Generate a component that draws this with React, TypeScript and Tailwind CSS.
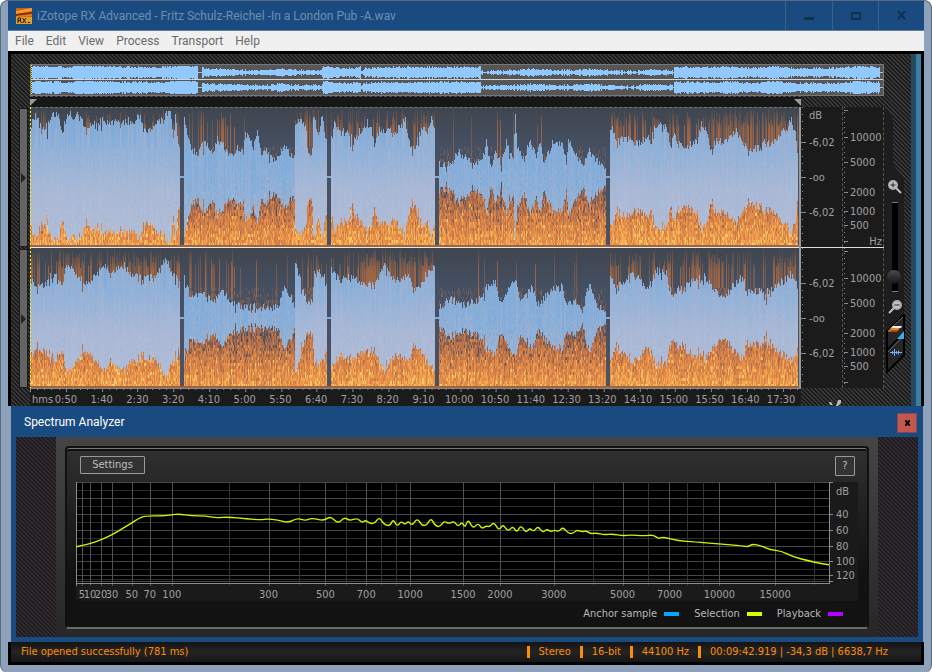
import { useState } from 'react'

type Pt = [number, number]

const MENU = ['File', 'Edit', 'View', 'Process', 'Transport', 'Help']

const TIMES = [
  '0:50', '1:40', '2:30', '3:20', '4:10', '5:00', '5:50', '6:40', '7:30', '8:20', '9:10',
  '10:00', '10:50', '11:40', '12:30', '13:20', '14:10', '15:00', '15:50', '16:40', '17:30',
]

// Songs on the record side: start, end, loud or quiet
const SONGS: [number, number, boolean][] = [
  [0, 150, true],
  [154, 265, false],
  [265, 297, true],
  [301, 406, true],
  [410, 577, false],
  [581, 769, true],
]

// Envelope: x, height of the peak above the centre line
const LEFT: Pt[] = [
  [0, 49], [3, 62], [6, 61], [11, 50], [15, 49], [20, 58], [24, 64], [28, 60], [32, 46], [37, 64], [40, 67], [44, 56],
  [48, 64], [54, 50], [57, 46], [62, 53], [67, 51], [70, 61], [75, 53], [82, 56], [87, 60], [93, 57], [103, 57],
  [110, 63], [113, 47], [118, 49], [125, 52], [133, 58], [137, 66], [140, 67], [143, 40], [145, 64], [149, 28],
  [154, 64], [157, 43], [162, 28], [167, 24], [175, 38], [182, 26], [187, 38], [193, 32], [200, 20], [208, 31],
  [213, 28], [215, 44], [220, 38], [223, 28], [227, 48], [232, 24], [237, 28], [242, 19], [248, 18], [253, 34],
  [260, 22], [264, 20], [265, 52], [270, 60], [275, 52], [278, 25], [282, 27], [283, 60], [288, 46], [292, 60],
  [296, 35], [301, 42], [304, 56], [310, 44], [317, 48], [323, 36], [330, 48], [339, 58], [344, 30], [347, 46],
  [357, 48], [365, 45], [375, 60], [378, 38], [382, 27], [387, 35], [393, 52], [397, 43], [402, 60], [406, 50],
  [410, 15], [417, 12], [423, 18], [430, 25], [440, 18], [448, 13], [455, 26], [457, 36], [462, 11], [465, 26],
  [472, 15], [477, 36], [482, 22], [484, 24], [486, 61], [488, 32], [495, 18], [500, 38], [507, 23], [510, 37],
  [515, 15], [523, 35], [532, 36], [537, 15], [539, 36], [547, 25], [553, 10], [560, 31], [570, 15], [576, 7],
  [581, 50], [583, 48], [588, 35], [595, 41], [602, 35], [610, 36], [617, 41], [622, 36], [624, 48], [628, 53],
  [637, 53], [641, 30], [645, 43], [652, 31], [660, 33], [668, 35], [672, 54], [677, 48], [682, 28], [687, 38],
  [693, 35], [700, 40], [707, 46], [712, 36], [717, 30], [723, 27], [730, 30], [735, 38], [742, 36], [748, 38],
  [753, 48], [758, 51], [762, 57], [766, 48], [769, 20],
]

const RIGHT: Pt[] = [
  [0, 38], [12, 32], [22, 44], [32, 37], [37, 55], [47, 45], [57, 34], [67, 45], [74, 55], [81, 44], [94, 54],
  [101, 44], [113, 39], [126, 42], [135, 59], [145, 42], [149, 40], [154, 42], [160, 25], [175, 25], [185, 19],
  [192, 28], [200, 17], [212, 12], [227, 12], [247, 12], [254, 32], [262, 20], [264, 18], [265, 59], [271, 35],
  [277, 17], [282, 17], [284, 45], [291, 49], [296, 35], [301, 50], [308, 39], [321, 42], [336, 35], [345, 34],
  [353, 54], [363, 39], [378, 42], [385, 25], [397, 45], [405, 51], [410, 12], [420, 20], [434, 14], [449, 19],
  [457, 32], [466, 38], [471, 15], [486, 40], [491, 19], [503, 32], [508, 14], [523, 30], [533, 32], [538, 12],
  [545, 20], [553, 6], [560, 38], [568, 12], [576, 9], [581, 45], [587, 29], [597, 42], [607, 43], [619, 29],
  [627, 49], [637, 45], [642, 25], [666, 38], [676, 42], [684, 27], [696, 25], [713, 42], [718, 27], [735, 27],
  [745, 32], [755, 39], [763, 45], [767, 38], [769, 20],
]

const OVERVIEW: Pt[] = [
  [0, 6], [40, 5], [44, 7], [100, 5], [135, 5], [148, 7], [166, 6], [167, 0], [170, 0], [171, 5], [178, 3], [200, 3],
  [212, 2], [235, 2], [250, 4], [262, 2], [290, 2], [292, 6], [312, 4], [329, 5], [330, 1], [333, 4], [350, 5],
  [390, 5], [449, 5], [450, 1], [480, 2], [500, 3], [530, 2], [560, 3], [600, 1], [618, 3], [641, 2], [642, 0],
  [643, 5], [690, 5], [695, 6], [720, 4], [745, 6], [760, 4], [800, 4], [830, 6], [848, 5], [849, 0], [854, 0],
]

const CURVE: Pt[] = [
  [0, 65], [14, 62], [25, 58], [36, 53], [46, 47], [56, 41], [62, 37], [69, 34], [87, 34], [96, 33], [103, 32],
  [116, 34], [130, 34], [140, 36], [153, 35], [171, 37], [186, 38], [191, 37], [202, 38], [213, 41], [222, 36],
  [230, 39], [236, 36], [249, 39], [255, 34], [263, 42], [269, 35], [274, 39], [282, 36], [287, 41], [290, 38],
  [295, 42], [300, 41], [304, 35], [309, 43], [315, 44], [318, 37], [322, 45], [326, 39], [330, 43], [333, 39],
  [337, 44], [342, 36], [347, 44], [352, 43], [356, 36], [360, 44], [365, 45], [369, 39], [374, 42], [379, 39],
  [383, 45], [387, 40], [390, 46], [393, 37], [398, 47], [403, 41], [407, 47], [411, 44], [415, 45], [419, 40],
  [424, 49], [428, 42], [433, 50], [438, 44], [442, 51], [446, 43], [451, 51], [455, 46], [459, 50], [463, 44],
  [468, 51], [472, 47], [476, 50], [480, 48], [484, 50], [488, 45], [493, 51], [498, 52], [502, 48], [507, 50],
  [512, 49], [516, 52], [522, 51], [529, 53], [538, 52], [548, 54], [556, 53], [569, 54], [579, 53], [584, 57],
  [588, 55], [604, 59], [620, 60], [644, 62], [669, 64], [674, 65], [678, 62], [687, 64], [696, 68], [707, 69],
  [719, 75], [734, 79], [748, 82], [755, 83],
]

const FREQS: [number, string][] = [
  [6, '5'], [14, '10'], [25, '20'], [36, '30'], [56, '50'], [74, '70'], [96, '100'], [193, '300'], [250, '500'],
  [291, '700'], [335, '1000'], [388, '1500'], [425, '2000'], [479, '3000'], [548, '5000'], [595, '7000'],
  [645, '10000'], [701, '15000'],
]
const MINOR_FREQS = [153, 224, 271, 306, 321, 518, 573, 613, 629, 740]
const LEVELS: [number, string][] = [[32, '40'], [48, '60'], [64, '80'], [79, '100'], [93, '120']]

const rng = (seed: number) => () => {
  seed = (seed * 1664525 + 1013904223) % 4294967296
  return seed / 4294967296
}

const sample = (pts: Pt[], x: number) => {
  const i = pts.findIndex((p) => p[0] >= x)
  if (i < 0) return pts[pts.length - 1][1]
  if (i === 0) return pts[0][1]
  const [x0, y0] = pts[i - 1]
  const [x1, y1] = pts[i]
  return y0 + ((y1 - y0) * (x - x0)) / (x1 - x0)
}

// Curve through the midpoints, so the peaks come out round
const smooth = (pts: Pt[]) => {
  let d = `M${pts[0]}`
  for (let i = 1; i < pts.length - 1; i++) {
    const [x, y] = pts[i]
    const [nx, ny] = pts[i + 1]
    d += `Q${x} ${y} ${(x + nx) / 2} ${(y + ny) / 2}`
  }
  return d + `L${pts[pts.length - 1]}`
}

const HEAT = ['#5f585d', '#866153', '#ad6d4c', '#cd7d49', '#e58e4a', '#f3a750', '#fcc864']

function buildChannel(env: Pt[], seed: number) {
  const rand = rng(seed)
  const heat = HEAT.map(() => '')
  let wave = ''
  let wash = ''
  let streaks = ''
  let faint = ''
  let sheen = ''
  let cluster = 0
  for (let x = 0; x < 769; x++) {
    const song = SONGS.find((s) => x >= s[0] && x < s[1])
    if (!song) {
      wave += `M${x} 69h1v2h-1z`
      continue
    }
    const loud = song[2]
    const base = sample(env, x)
    const spike = rand() < 0.08 ? -rand() * 10 : 0
    const amp = Math.max(5, Math.min(66, Math.round(base - 1 + (rand() - 0.5) * (loud ? 9 : 8) + spike)))
    const bar = `M${x} ${70 - amp}h1v${amp * 2}h-1z`
    wave += bar
    if (loud) wash += bar
    cluster = cluster * 0.9 + (rand() - 0.5) * 0.5
    const striped = x > 154 && x < 215
    const hot = striped ? 0.3 : loud ? 0.6 + cluster : 0.04
    if (rand() < hot) {
      const top = Math.round(rand() * 20)
      if (rand() < 0.5) streaks += `M${x} ${top}h1V90h-1z`
      else faint += `M${x} ${top}h1V90h-1z`
    }
    if (rand() < 0.3) sheen += bar
    const column = (rand() - 0.5) * 1.2
    for (let y = 40; y < 138; y += 3) {
      const n = y / 140
      let level = loud ? n * 6.4 - 1.2 : n * 7 - 2.1
      level += column + (rand() - 0.5) * 2
      if (!loud && rand() < 0.85 - n) level -= 2
      if (rand() < (n - 0.55) * 0.4) level += 1.6
      const k = Math.min(6, Math.floor(level))
      if (k >= 0) heat[k] += `M${x} ${y}h1v3h-1z`
    }
  }
  return { wave, wash, heat, streaks, faint, sheen }
}

const CHANNELS = [buildChannel(LEFT, 11), buildChannel(RIGHT, 57)]

function buildOverview(seed: number) {
  const rand = rng(seed)
  let d = ''
  for (let x = 1; x < 852; x++) {
    const base = sample(OVERVIEW, x)
    const a = Math.max(0, Math.min(6, Math.round(base + (base > 1 ? (rand() - 0.65) * 2 : 0))))
    d += `M${x} ${7 - a}h1v${a * 2 + 1}h-1z`
  }
  return d
}

const OVERVIEWS = [buildOverview(3), buildOverview(8)]

const HATCH = 'bg-[repeating-linear-gradient(45deg,#1a1a1a_0_1px,#484848_2px,#1a1a1a_3px)]'
const WEAVE = 'bg-[repeating-linear-gradient(45deg,#1f1b1f_0_1px,#383338_2px,#1f1b1f_3px)]'

function TitleBar() {
  return (
    <header className="flex h-[30px] items-center border-b border-[#5f7f9f] bg-[#1a4b80] font-[Roboto,sans-serif] text-xs text-[#6d8eaf]">
      <svg className="ml-2 size-4 shrink-0" viewBox="0 0 16 16">
        <rect width="16" height="16" fill="#c9601a" />
        <path d="M0 3l16-3v3L0 6z" fill="#f79a2a" />
        <path d="M0 6l16-2v2L0 8z" fill="#7d2f08" />
        <path d="M0 8l16-2v2L0 9z" fill="#e87c20" />
        <rect y="9" width="16" height="7" fill="#e0a02c" />
        <path d="M2 15v-5h2.500v2.500H2m2 0l1.500 2.500M6.500 10l3.500 5m0-5l-3.500 5M12 14.500h2" stroke="#20140a" fill="none" />
      </svg>
      <h1 className="ml-[5px] flex-1 truncate">iZotope RX Advanced - Fritz Schulz-Reichel -In a London Pub -A.wav</h1>
      <button aria-label="Minimize" className="flex h-full w-[47px] items-center justify-center border-l border-[#3c6088]">
        <svg width="10" height="10"><path d="M0 6h10v3H0z" fill="#12304f" /></svg>
      </button>
      <button aria-label="Maximize" className="flex h-full w-[46px] items-center justify-center border-l border-[#3c6088]">
        <svg width="10" height="8"><path d="M1 1h8v6H1z" fill="none" stroke="#12304f" strokeWidth="2" /></svg>
      </button>
      <button aria-label="Close" className="flex h-full w-[46px] items-center justify-center border-l border-[#3c6088]">
        <svg width="10" height="9"><path d="M1 0l7 8M8 0L1 8" stroke="#12304f" strokeWidth="2" /></svg>
      </button>
    </header>
  )
}

function MenuBar() {
  return (
    <nav className="flex h-5 items-center bg-[#f0f0f0] pl-px font-[Roboto,sans-serif] text-xs text-[#6a6a6a]">
      {MENU.map((item) => (
        <button key={item} className="px-1.5">{item}</button>
      ))}
    </nav>
  )
}

function Overview() {
  return (
    <div className="h-8 border border-[#777] bg-[#565656]">
      <svg className="block h-full w-full" viewBox="0 0 852 30" preserveAspectRatio="none" shapeRendering="crispEdges">
        <path d={OVERVIEWS[0]} fill="#90c8ff" />
        <g transform="translate(0 15)"><path d={OVERVIEWS[1]} fill="#90c8ff" /></g>
        <path d="M0 14h852v1H0z" fill="#d2d2d2" />
        <path d="M0 0v30" stroke="#f2f200" strokeWidth="2" strokeDasharray="1 1" />
      </svg>
    </div>
  )
}

function Spectrogram() {
  return (
    <svg className="block h-[281px] w-full" viewBox="0 0 770 281" preserveAspectRatio="none" shapeRendering="crispEdges">
      <defs>
        <linearGradient id="sky" x1="0" y1="0" x2="0" y2="1">
          <stop offset="0" stopColor="#40464f" />
          <stop offset="0.3" stopColor="#455063" />
          <stop offset="1" stopColor="#4c5260" />
        </linearGradient>
        <linearGradient id="streak" gradientUnits="userSpaceOnUse" x1="0" y1="0" x2="0" y2="90">
          <stop offset="0" stopColor="#a8663f" stopOpacity="0.15" />
          <stop offset="0.25" stopColor="#b46b40" stopOpacity="0.9" />
          <stop offset="1" stopColor="#c4733f" />
        </linearGradient>
        <linearGradient id="wash" gradientUnits="userSpaceOnUse" x1="0" y1="0" x2="0" y2="140">
          <stop offset="0.15" stopColor="#c8c4d8" stopOpacity="0" />
          <stop offset="0.6" stopColor="#c8c4d8" stopOpacity="0.4" />
        </linearGradient>
      </defs>
      {CHANNELS.map((c, i) => (
        <g key={i} transform={i ? 'translate(0 141)' : undefined}>
          <rect width="770" height="140" fill="url(#sky)" />
          <path d={c.faint} fill="url(#streak)" opacity="0.5" />
          <path d={c.streaks} fill="url(#streak)" opacity="0.85" />
          {c.heat.map((d, k) => (
            <path key={k} d={d} fill={HEAT[k]} />
          ))}
          <path d="M0 138h770v2H0z" fill="#9c6440" />
          <path d={c.wave} fill="#8cc0f4" opacity="0.82" />
          <path d={c.wash} fill="url(#wash)" />
          <path d={c.sheen} fill="#b8b8d0" opacity="0.2" />
        </g>
      ))}
      <path d="M0 0.500h770" stroke="#777" strokeDasharray="3 2" />
      <path d="M0 140h770v1H0z" fill="#e8e8e8" />
      <path d="M0 0v281" stroke="#f2f200" strokeWidth="2" strokeDasharray="2 2" />
    </svg>
  )
}

function TimeRuler() {
  return (
    <div className="relative h-[18px] bg-[#1b1b1b] text-[#a0a0a0]">
      <svg className="absolute inset-0 h-1 w-full" viewBox="0 0 770 4" preserveAspectRatio="none">
        <path d="M0 0.500h770" stroke="#8a8a8a" />
        {Array.from({ length: 108 }, (_, i) => (
          <path key={i} d={`M${Math.round(i * 7.16)}.500 0v${i % 5 ? 2 : 4}`} stroke="#8a8a8a" />
        ))}
      </svg>
      <span className="absolute left-0.5 top-[5px]">hms</span>
      <div className="ml-[18px] mr-0.5 grid grid-cols-[repeat(21,minmax(0,1fr))] pt-[5px] text-center">
        {TIMES.map((t) => (
          <span key={t} className="whitespace-nowrap">{t}</span>
        ))}
      </div>
    </div>
  )
}

function LevelScale({ unit }: { unit?: string }) {
  return (
    <div className="relative h-[140px] pl-2 text-[#a0a0a0]">
      <svg className="absolute left-0 top-0" width="6" height="140" stroke="#8a8a8a">
        <path d="M1.500 0v140" strokeDasharray="1 6" />
        <path d="M0 35.500h5M0 70.500h5M0 105.500h5" />
      </svg>
      <div className="flex h-[18px] items-center">{unit}</div>
      <div className="flex h-[35px] items-center">-6,02</div>
      <div className="flex h-[35px] items-center">-oo</div>
      <div className="flex h-[35px] items-center">-6,02</div>
    </div>
  )
}

function FreqScale({ unit }: { unit?: string }) {
  return (
    <div className="relative h-[140px] overflow-hidden border-x border-dashed border-[#555] pl-[7px] text-[#a0a0a0]">
      <svg className="absolute left-0 top-0" width="6" height="140" stroke="#8a8a8a">
        <path d="M1.500 0v140" strokeDasharray="1 4" />
        <path d="M1 3.500h4M1 30.500h4M1 55.500h4M1 85.500h4M1 104.500h4M1 118.500h4M1 134.500h4" />
      </svg>
      <div className="mt-6">10000</div>
      <div className="mt-[11px]">5000</div>
      <div className="mt-4">2000</div>
      <div className="mt-[5px]">1000</div>
      <div>500</div>
      <div className="mt-0.5 pr-px text-right">{unit}</div>
    </div>
  )
}

function ZoomRail() {
  const [zoom, setZoom] = useState(10)
  return (
    <div className="relative flex w-[27px] flex-col items-start">
      <svg className="absolute left-0 top-2.5" width="27" height="270">
        <path d="M0 0l9 12v46l11 15v150L0 262z" fill="#1d1d1d" />
      </svg>
      <button aria-label="Zoom in" className="relative ml-1 mt-[84px]">
        <svg className="block" width="14" height="14" fill="none">
          <circle cx="5" cy="5" r="4" fill="#c4c4c4" stroke="#b0b0b0" strokeWidth="2" />
          <path d="M2.500 5h5M5 2.500v5" stroke="#222" />
          <path d="M8 8l5 5" stroke="#c0c0c0" strokeWidth="2" />
        </svg>
      </button>
      <input
        type="range"
        aria-label="Zoom level"
        value={zoom}
        onChange={(e) => setZoom(Number(e.target.value))}
        className="relative ml-1 mt-2 h-[90px] w-3.5 appearance-none bg-transparent [direction:rtl] [writing-mode:vertical-lr] [&::-webkit-slider-runnable-track]:w-1.5 [&::-webkit-slider-runnable-track]:border-x [&::-webkit-slider-runnable-track]:border-[#777] [&::-webkit-slider-runnable-track]:bg-black [&::-webkit-slider-thumb]:-ml-[5px] [&::-webkit-slider-thumb]:size-3.5 [&::-webkit-slider-thumb]:appearance-none [&::-webkit-slider-thumb]:rounded-full [&::-webkit-slider-thumb]:bg-linear-to-b [&::-webkit-slider-thumb]:from-[#4c4c4c] [&::-webkit-slider-thumb]:to-[#161616]"
      />
      <button aria-label="Zoom out" className="relative ml-1 mt-2">
        <svg className="block" width="14" height="14" fill="none">
          <circle cx="9" cy="5" r="4" fill="#c4c4c4" stroke="#b0b0b0" strokeWidth="2" />
          <path d="M6.500 5h5" stroke="#222" />
          <path d="M6 8l-5 5" stroke="#c0c0c0" strokeWidth="2" />
        </svg>
      </button>
      <button aria-label="Spectrogram and waveform balance" className="relative ml-0.5">
        <svg className="block" width="19" height="60">
          <path d="M1 18L18 1v40L1 58z" fill="#262626" stroke="#000" strokeWidth="2" />
          <path d="M2 17L17 3" stroke="#777" />
          <path d="M1 36L18 19" stroke="#000" strokeWidth="2" />
          <path d="M2 38L17 22" stroke="#666" />
          <path d="M18 17v8h-7z" fill="#38b0f0" />
          <path d="M6 13h9l-5 5H2z" fill="#e58a2c" />
          <path d="M7 12h9l-1 2H5z" fill="#f4ece0" />
          <path d="M5 16h8l-2 2H3z" fill="#a74a1a" />
          <path d="M4 38.500h12M6.500 37v3M8.500 35v7M10.500 37v3M12.500 36.500v4" stroke="#6fb2ff" />
        </svg>
      </button>
    </div>
  )
}

function Editor() {
  return (
    <main className={`flex border-l-[3px] border-t-[3px] border-black ${HATCH}`}>
      <div className="flex w-[19px] flex-col gap-0.5 pl-2 pt-[54px]">
        {['Left channel', 'Right channel'].map((name) => (
          <button key={name} aria-label={name} className="flex h-[139px] w-[9px] items-center justify-center border border-[#1a1a1a] bg-[#646464]">
            <svg width="6" height="10"><path d="M0 0l5 5-5 5z" fill="#222" /></svg>
          </button>
        ))}
      </div>
      <div className="min-w-0 flex-1 pt-2.5">
        <Overview />
        <div className="flex">
          <div className="min-w-0 flex-1">
            <div className="flex h-[11px] items-end justify-between border-t border-dashed border-[#555] bg-[#171717]">
              <svg width="7" height="8"><path d="M0 0h7L0 7z" fill="#999" /></svg>
              <svg width="7" height="8"><path d="M0 0h7v7z" fill="#999" /></svg>
            </div>
            <div className="border-r-2 border-[#999]">
              <Spectrogram />
            </div>
            <TimeRuler />
          </div>
          <div className="grid w-[83px] grid-cols-[41px_42px] content-start pt-[11px]">
            <div className="border-b border-[#ddd] bg-[#1b1b1b]"><LevelScale unit="dB" /></div>
            <div className="border-b border-[#ddd] bg-[#1b1b1b]"><FreqScale unit="Hz" /></div>
            <div className="bg-[#1b1b1b]"><LevelScale /></div>
            <div className="bg-[#1b1b1b]"><FreqScale /></div>
            <svg className="col-span-2 ml-7 mt-3" width="14" height="6">
              <path d="M0 2h2l2 3H1zM9 0h3v3l-3 3H7z" fill="#b8b8b8" />
            </svg>
          </div>
        </div>
      </div>
      <div className="pt-[42px]"><ZoomRail /></div>
      <div className="w-[5px] bg-[#25475f]" />
      <div className="w-[5px] bg-[#3a80a4]" />
      <div className="w-[3px] bg-black" />
    </main>
  )
}

function SpectrumChart() {
  return (
    <svg className="block w-full text-[11px]" viewBox="0 0 784 120">
      <rect width="755" height="101" fill="#000" />
      <rect x="755" width="29" height="119" fill="#1a1a1a" />
      <rect y="101" width="784" height="18" fill="#1a1a1a" />
      <g shapeRendering="crispEdges">
        {[8, 24, 40, 56, 72, 87, 97].map((y) => (
          <path key={y} d={`M0 ${y}.500h755`} stroke="#2c2c2c" />
        ))}
        {[0, 16, 32, 48, 64, 79, 93, 99].map((y) => (
          <path key={y} d={`M0 ${y}.500h755`} stroke="#484848" />
        ))}
        {MINOR_FREQS.map((x) => (
          <path key={x} d={`M${x}.500 0v104`} stroke="#333" />
        ))}
        {FREQS.map(([x]) => (
          <path key={x} d={`M${x}.500 0v104`} stroke="#505050" />
        ))}
        <path d="M0 101.500h755M755.500 0v102M755 0.500h4M755 99.500h4M0.500 0v104" stroke="#8c8c8c" />
        {LEVELS.map(([y]) => (
          <path key={y} d={`M755 ${y}.500h4`} stroke="#8c8c8c" />
        ))}
      </g>
      <path d={smooth(CURVE)} fill="none" stroke="#ccf600" strokeWidth="1.4" />
      <g fill="#a0a0a0" textAnchor="middle">
        {FREQS.map(([x, label]) => (
          <text key={label} x={x} y="116">{label}</text>
        ))}
      </g>
      <g fill="#a0a0a0">
        <text x="762" y="13">dB</text>
        {LEVELS.map(([y, label]) => (
          <text key={label} x="762" y={y + 4}>{label}</text>
        ))}
      </g>
    </svg>
  )
}

function Legend({ name, children }: { name: string; children: React.ReactNode }) {
  return (
    <li className="flex items-center gap-[7px]">
      {name}
      {children}
    </li>
  )
}

function SpectrumAnalyzer() {
  return (
    <section className="ml-[3px] mr-px border-x-[5px] border-b-[5px] border-[#1a4b80]">
      <div className="flex h-[31px] items-center justify-between bg-[#1a4b80] pl-2 pr-px">
        <h2 className="font-[Roboto,sans-serif] text-xs text-white">Spectrum Analyzer</h2>
        <button aria-label="Close analyzer" className="mt-0.5 flex size-5 items-center justify-center border border-[#7c4a58] bg-[#c4574c]">
          <svg width="5" height="6"><path d="M0 0l5 6M5 0L0 6" stroke="#000" strokeWidth="2" /></svg>
        </button>
      </div>
      <div className={`px-10 ${WEAVE}`}>
        <div className="bg-linear-to-b from-[#454545] to-[#272727] px-[9px] pb-2 pt-[9px]">
          <div className="rounded-sm border-2 border-[#111] border-b-[#6a6a6a] bg-linear-to-b from-[#303030] to-[#121212] to-70% px-[9px] pb-0.5 pt-2 shadow-[inset_0_1px_#777,inset_0_3px_#111]">
            <div className="flex items-start justify-between pb-1.5 pr-[3px]">
              <button className="ml-1 h-[18px] w-[65px] rounded-[1px] border border-[#999] bg-[#333] text-[#c0c0c0]">Settings</button>
              <button className="size-5 rounded-[1px] border border-[#999] bg-[#333] text-[#c0c0c0]">?</button>
            </div>
            <SpectrumChart />
            <ul className="flex justify-end gap-[15px] pb-1 pr-[15px] pt-[5px] text-[#b8b8b8]">
              <Legend name="Anchor sample"><span className="h-1 w-[15px] bg-[#00a8ff]" /></Legend>
              <Legend name="Selection"><span className="h-1 w-[15px] bg-[#d4ff00]" /></Legend>
              <Legend name="Playback"><span className="h-1 w-[15px] bg-[#b400ff]" /></Legend>
            </ul>
          </div>
        </div>
      </div>
    </section>
  )
}

function StatusBar() {
  return (
    <footer className="flex h-[23px] items-center border-x-[3px] border-b-[3px] border-black bg-linear-to-b from-[#141414] via-[#242424] to-[#161616] pl-2.5 pr-[33px] text-[#ff8c00]">
      <p className="flex-1">File opened successfully (781 ms)</p>
      <div className="flex items-center gap-[9px]">
        <span className="h-3 w-[3px] bg-[#ff8c00]" />
        <span>Stereo</span>
        <span className="h-3 w-[3px] bg-[#ff8c00]" />
        <span>16-bit</span>
        <span className="h-3 w-[3px] bg-[#ff8c00]" />
        <span>44100 Hz</span>
        <span className="h-3 w-[3px] bg-[#ff8c00]" />
        <span>00:09:42.919 | -34,3 dB | 6638,7 Hz</span>
      </div>
    </footer>
  )
}

export default function App() {
  return (
    <div className="min-h-screen rounded-lg border-x border-t border-[#5b6a7c] bg-[#8da1bb] px-[7px] pb-2 font-['DejaVu_Sans_Condensed','Noto_Sans',sans-serif] text-[11px] leading-[14px]">
      <TitleBar />
      <MenuBar />
      <Editor />
      <SpectrumAnalyzer />
      <StatusBar />
    </div>
  )
}
